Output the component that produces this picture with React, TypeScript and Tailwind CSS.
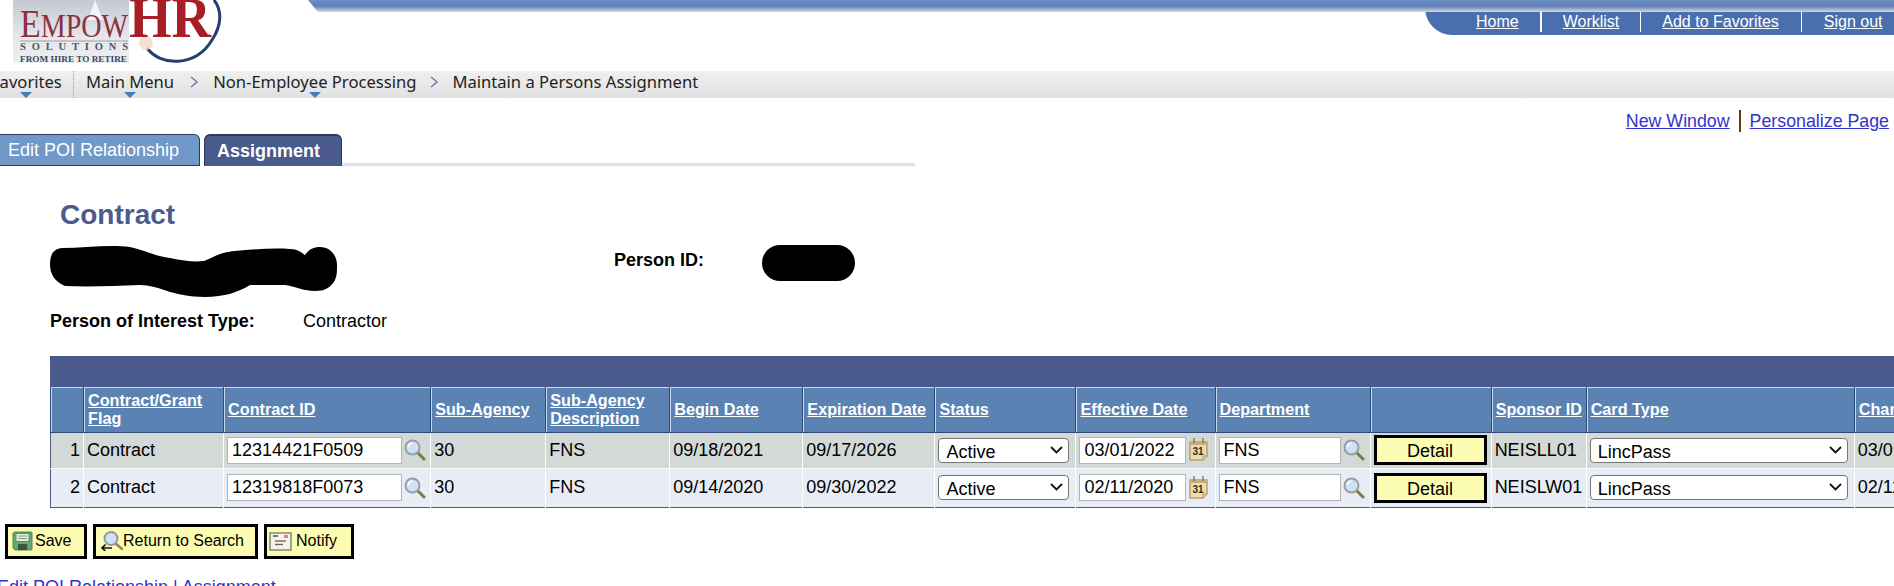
const arial = "font-['Liberation_Sans',Arial,sans-serif]";

const navItems = [
  { label: "Main Menu", arrow: true, gap: "w-[39px]" },
  { label: "Non-Employee Processing", arrow: true, gap: "w-[36px]" },
  { label: "Maintain a Persons Assignment", arrow: false, gap: "" },
];

const columns = [
  { label: "", width: 33 },
  { label: "Contract/Grant Flag", width: 140 },
  { label: "Contract ID", width: 207 },
  { label: "Sub-Agency", width: 115 },
  { label: "Sub-Agency Description", width: 124 },
  { label: "Begin Date", width: 133 },
  { label: "Expiration Date", width: 132 },
  { label: "Status", width: 141 },
  { label: "Effective Date", width: 139 },
  { label: "Department", width: 155 },
  { label: "", width: 121 },
  { label: "Sponsor ID", width: 95 },
  { label: "Card Type", width: 268 },
  { label: "Change Date", width: 201 },
];

const rows = [
  {
    n: 1,
    id: "12314421F0509",
    begin: "09/18/2021",
    expiry: "09/17/2026",
    effective: "03/01/2022",
    sponsor: "NEISLL01",
    changed: "03/01/2022",
    bg: "bg-[#d3d9d6]",
    h: "h-[36px]",
  },
  {
    n: 2,
    id: "12319818F0073",
    begin: "09/14/2020",
    expiry: "09/30/2022",
    effective: "02/11/2020",
    sponsor: "NEISLW01",
    changed: "02/11/2020",
    bg: "bg-[#e8edf5]",
    h: "h-[39px]",
  },
];

function Logo() {
  return (
    <svg width="232" height="71" viewBox="0 0 232 71" className="shrink-0">
      <defs>
        <linearGradient id="logoBack" x1="0" y1="0" x2="0" y2="1">
          <stop offset="0" stopColor="#c4c9d2" />
          <stop offset="0.55" stopColor="#e4e6ea" />
          <stop offset="1" stopColor="#eeeff1" />
        </linearGradient>
      </defs>
      <rect x="13" y="0" width="116" height="63" fill="url(#logoBack)" />
      <polygon points="95,0 103,20 88,20" fill="#f4f5f7" />
      <path d="M147 48 C160 66 195 68 212 40 C222 25 222 10 214 0" fill="none" stroke="#23406f" strokeWidth="3" />
      <circle cx="146" cy="43" r="7" fill="#f3d9c8" opacity="0.8" />
      <text x="20" y="37" fontFamily="Liberation Serif" fontSize="33" fill="#8f3040" textLength="108" lengthAdjust="spacingAndGlyphs">
        <tspan fontSize="40">E</tspan>MPOW
      </text>
      <text x="129" y="37" fontFamily="Liberation Serif" fontWeight="700" fontSize="57" fill="#a81e26" textLength="82" lengthAdjust="spacingAndGlyphs">
        HR
      </text>
      <line x1="20" y1="41" x2="128" y2="41" stroke="#9aa1ad" />
      <text x="20" y="50" fontFamily="Liberation Serif" fontWeight="700" fontSize="10.5" fill="#4c5568" textLength="108">
        SOLUTIONS
      </text>
      <text x="20" y="62" fontFamily="Liberation Serif" fontWeight="700" fontSize="8" fill="#3f475c" textLength="107" lengthAdjust="spacingAndGlyphs">
        FROM HIRE TO RETIRE
      </text>
    </svg>
  );
}

function LookupIcon() {
  return (
    <svg width="22" height="22" viewBox="0 0 22 22" className="shrink-0">
      <line x1="13" y1="13" x2="20" y2="20" stroke="#7d7a45" strokeWidth="3" strokeLinecap="round" />
      <circle cx="8.5" cy="8.5" r="7" fill="#cfe2f5" stroke="#9a9fa5" strokeWidth="2" />
      <path d="M4.5 8 a4.5 4.5 0 0 1 4 -4" fill="none" stroke="#ffffff" strokeWidth="1.5" />
    </svg>
  );
}

function CalendarIcon() {
  return (
    <svg width="19" height="24" viewBox="0 0 19 24" className="shrink-0">
      <path d="M1 4 H18 V18 L14 22 H1 Z" fill="#ecdcae" stroke="#b89f6e" strokeWidth="1.5" />
      <path d="M14 22 V18 H18" fill="#d8c79f" stroke="#b89f6e" />
      <rect x="1" y="3" width="17" height="4" fill="#c7ad7c" />
      <line x1="5" y1="0" x2="5" y2="5" stroke="#8c7a55" strokeWidth="1.5" />
      <line x1="14" y1="0" x2="14" y2="5" stroke="#8c7a55" strokeWidth="1.5" />
      <text x="3.5" y="17" fontFamily="Liberation Sans" fontWeight="700" fontSize="10" fill="#2f2f25">
        31
      </text>
    </svg>
  );
}

function SaveIcon() {
  return (
    <svg width="21" height="20" viewBox="0 0 21 20" className="mr-[2px] shrink-0">
      <path d="M1 3 a2 2 0 0 1 2 -2 H19 a1 1 0 0 1 1 1 V18 a1 1 0 0 1 -1 1 H3 L1 17 Z" fill="#67a86d" stroke="#4d8455" />
      <rect x="4" y="2.5" width="13" height="8" fill="#e6eee4" stroke="#5d8d63" />
      <line x1="6" y1="5" x2="15" y2="5" stroke="#7c9c80" />
      <line x1="6" y1="7.5" x2="15" y2="7.5" stroke="#7c9c80" />
      <rect x="6" y="13" width="9" height="6" fill="#38593d" />
    </svg>
  );
}

function ReturnIcon() {
  return (
    <svg width="23" height="20" viewBox="0 0 23 20" className="shrink-0">
      <line x1="15" y1="12" x2="22" y2="18" stroke="#8d8a55" strokeWidth="2.5" strokeLinecap="round" />
      <circle cx="11" cy="7.5" r="6.5" fill="#cfe2f5" stroke="#8f98a5" strokeWidth="2" />
      <path d="M12 17 H2 M5.5 13.5 L2 17 L5.5 20" fill="none" stroke="#111111" strokeWidth="1.6" />
    </svg>
  );
}

function NotifyIcon() {
  return (
    <svg width="23" height="19" viewBox="0 0 23 19" className="mr-[4px] shrink-0">
      <rect x="1" y="1" width="21" height="17" fill="#f7f3e6" stroke="#85857a" strokeWidth="1.5" />
      <rect x="15" y="3" width="4" height="3" fill="#d9828c" />
      <rect x="4" y="3" width="5" height="2" fill="#777770" />
      <line x1="6" y1="9" x2="17" y2="9" stroke="#66665f" strokeWidth="1.4" />
      <line x1="6" y1="12.5" x2="14" y2="12.5" stroke="#66665f" strokeWidth="1.4" />
    </svg>
  );
}

function ActionButton({ icon, label, className }: { icon: React.ReactNode; label: string; className: string }) {
  return (
    <button type="button" className={`flex h-[35px] items-center border-[3px] border-black bg-[#fcfcb2] text-[16px] text-black ${className}`}>
      {icon}
      <span>{label}</span>
    </button>
  );
}

function TextBox({ value, className }: { value: string; className: string }) {
  return (
    <input
      readOnly
      defaultValue={value}
      className={`h-[27px] shrink-0 border border-[#b4b4b4] bg-white px-[4px] text-[18px] text-black ${className}`}
    />
  );
}

function Choice({ value, className }: { value: string; className: string }) {
  return (
    <div className={`relative h-[25px] shrink-0 ${className}`}>
      <select
        defaultValue={value}
        className="h-full w-full appearance-none rounded-[4px] border border-[#767676] bg-white pl-[7px] text-[18px] text-black"
      >
        <option>{value}</option>
      </select>
      <svg width="13" height="8" viewBox="0 0 13 8" className="pointer-events-none absolute right-[6px] top-[8px]">
        <path d="M1 1 L6.5 6.5 L12 1" fill="none" stroke="#111111" strokeWidth="1.8" />
      </svg>
    </div>
  );
}

function Cell({ children, last }: { children: React.ReactNode; last?: boolean }) {
  return (
    <td className={`overflow-hidden whitespace-nowrap px-[3px] align-middle text-[18px] text-black ${last ? "" : "border-r border-white"}`}>
      {children}
    </td>
  );
}

export default function App() {
  return (
    <div className={`relative h-[586px] w-[1894px] overflow-hidden bg-white ${arial}`}>
      <header className="flex h-[71px]">
        <Logo />
        <div className="min-w-0 flex-1">
          <div className="ml-[76px] h-[12px] bg-gradient-to-b from-[#6f90c6] via-[#5f7fb8] to-[#d8d8d8] [clip-path:polygon(0_0,100%_0,100%_100%,10px_100%)]" />
          <div className="-mt-[4px] ml-auto flex h-[27px] w-[469px] items-center rounded-bl-[28px] bg-[#4a6fae] pl-[51px] text-[16px] text-white">
            <a className="underline">Home</a>
            <span className="mx-[21px] h-[20px] w-[2px] bg-white" />
            <a className="underline">Worklist</a>
            <span className="mx-[21px] h-[20px] w-px bg-white" />
            <a className="underline">Add to Favorites</a>
            <span className="mx-[22px] h-[20px] w-px bg-white" />
            <a className="underline">Sign out</a>
          </div>
        </div>
      </header>

      <nav className="flex h-[27px] items-start bg-gradient-to-b from-[#f0f0f0] to-[#e0e0e0] font-['Noto_Sans',sans-serif] text-[16.6px] leading-[22px] text-[#222222]">
        <div className="relative -ml-[9px] flex h-full w-[83px] items-start border-r border-dotted border-[#999999]">
          <span>Favorites</span>
          <span className="absolute bottom-0 left-[29px] h-0 w-0 border-x-[6px] border-b-0 border-t-[6px] border-x-transparent border-t-[#3f7fc0]" />
        </div>
        <div className="flex h-full items-start pl-[12px]">
          {navItems.map((item) => (
            <div key={item.label} className="flex h-full items-start">
              <div className="relative h-full">
                <span>{item.label}</span>
                {item.arrow && (
                  <span className="absolute bottom-0 left-1/2 -ml-[6px] h-0 w-0 border-x-[6px] border-b-0 border-t-[6px] border-x-transparent border-t-[#3f7fc0]" />
                )}
              </div>
              {item.gap && (
                <div className={`flex h-[22px] items-center justify-center ${item.gap}`}>
                  <svg width="8" height="12" viewBox="0 0 8 12">
                    <path d="M1 1 L7 6 L1 11" fill="none" stroke="#7187a8" strokeWidth="1.6" />
                  </svg>
                </div>
              )}
            </div>
          ))}
        </div>
      </nav>

      <div className="flex h-[36px] items-start justify-end pr-[5px] pt-[12px] text-[17.8px] leading-[22px] text-[#3333cc]">
        <a className="underline">New Window</a>
        <span className="mx-[9px] h-[22px] w-[2px] bg-[#6b3a10]" />
        <a className="underline">Personalize Page</a>
      </div>

      <div className="flex h-[32px] items-end">
        <div className="flex h-[32px] w-[200px] items-center rounded-tr-[6px] border-b-[1px] border-r border-t border-[#2d3a5c] bg-[#7099c8] pl-[8px] text-[18px] text-white">
          Edit POI Relationship
        </div>
        <div className="ml-[4px] flex h-[32px] w-[138px] items-center rounded-t-[6px] border-x border-t-2 border-[#2d3a5c] bg-[#4a5a8c] pl-[12px] text-[18px] font-bold text-white">
          Assignment
        </div>
        <div className="mb-0 h-[3px] w-[573px] bg-[#d8e4f3]" />
      </div>

      <h1 className="ml-[60px] mt-[34px] text-[28px] font-bold leading-[30px] text-[#4c5a8c]">Contract</h1>

      <div className="relative h-[78px]">
        <svg width="292" height="58" viewBox="0 0 292 58" className="absolute left-[49px] top-[12px]">
          <path
            d="M1 23 C1 10 6 7 13 6 C35 6 60 2 81 5 C95 8 105 14 121 16 C135 19 145 20 155 19 C165 15 172 10 186 9 C205 7 225 6 241 7 C248 7 252 10 256 13 C260 7 265 5 271 5 C282 5 288 14 288 23 C288 30 288 33 286 38 C282 46 275 49 266 49 C255 49 248 45 236 43 C225 43 215 43 201 43 C190 50 175 55 156 55 C140 55 130 52 121 50 C110 46 100 43 91 43 C65 44 40 45 16 44 C6 40 1 32 1 23 Z"
            fill="#000000"
          />
        </svg>
        <span className="absolute left-[614px] top-[17px] text-[18px] font-bold text-black">Person ID:</span>
        <span className="absolute left-[762px] top-[15px] h-[36px] w-[93px] rounded-[18px] bg-black" />
      </div>

      <div className="ml-[50px] flex h-[26px] items-center text-black">
        <span className="w-[253px] text-[18px] font-bold">Person of Interest Type:</span>
        <span className="text-[18px]">Contractor</span>
      </div>

      <div className="ml-[50px] mt-[22px] w-[2006px]">
        <div className="h-[31px] border border-b-0 border-[#4a5a8c] bg-[#4a5a8c]" />
        <table className="w-[2006px] table-fixed border-collapse border-x border-b border-[#4a5a8c]">
          <colgroup>
            {columns.map((col, i) => (
              <col key={i} style={{ width: col.width }} />
            ))}
          </colgroup>
          <thead>
            <tr className="h-[45px] border-b border-[#2f4a78] bg-[#5a83b3]">
              {columns.map((col, i) => (
                <th
                  key={i}
                  className="border-l border-[#2f4a78] pl-[4px] text-left align-middle text-[16.2px] font-bold leading-[18px] text-white shadow-[inset_1px_1px_0_#c9d8ea]"
                >
                  {col.label && <a className="underline">{col.label}</a>}
                </th>
              ))}
            </tr>
          </thead>
          <tbody>
            {rows.map((row) => (
              <tr key={row.n} className={`${row.h} ${row.bg} border-b border-white last:border-b-0`}>
                <Cell>
                  <div className="text-right">{row.n}</div>
                </Cell>
                <Cell>Contract</Cell>
                <Cell>
                  <div className="flex items-center gap-[2px]">
                    <TextBox value={row.id} className="w-[175px]" />
                    <LookupIcon />
                  </div>
                </Cell>
                <Cell>30</Cell>
                <Cell>FNS</Cell>
                <Cell>{row.begin}</Cell>
                <Cell>{row.expiry}</Cell>
                <Cell>
                  <Choice value="Active" className="w-[131px]" />
                </Cell>
                <Cell>
                  <div className="flex items-center gap-[3px]">
                    <TextBox value={row.effective} className="w-[107px]" />
                    <CalendarIcon />
                  </div>
                </Cell>
                <Cell>
                  <div className="flex items-center gap-[2px]">
                    <TextBox value="FNS" className="w-[122px]" />
                    <LookupIcon />
                  </div>
                </Cell>
                <Cell>
                  <button type="button" className="h-[30px] w-[113px] border-[3px] border-black bg-[#fcfcb2] text-[18px] text-black">
                    Detail
                  </button>
                </Cell>
                <Cell>{row.sponsor}</Cell>
                <Cell>
                  <Choice value="LincPass" className="w-[258px]" />
                </Cell>
                <Cell last>{row.changed}</Cell>
              </tr>
            ))}
          </tbody>
        </table>
      </div>

      <div className="ml-[5px] mt-[16px] flex gap-[6px]">
        <ActionButton icon={<SaveIcon />} label="Save" className="w-[82px] pl-[4px]" />
        <ActionButton icon={<ReturnIcon />} label="Return to Search" className="w-[165px] pl-[4px]" />
        <ActionButton icon={<NotifyIcon />} label="Notify" className="w-[90px] pl-[2px]" />
      </div>

      <div className="-ml-[3px] mt-[18px] text-[18px] leading-[20px] text-[#3333cc]">
        <a>Edit POI Relationship</a> | <a>Assignment</a>
      </div>
    </div>
  );
}
